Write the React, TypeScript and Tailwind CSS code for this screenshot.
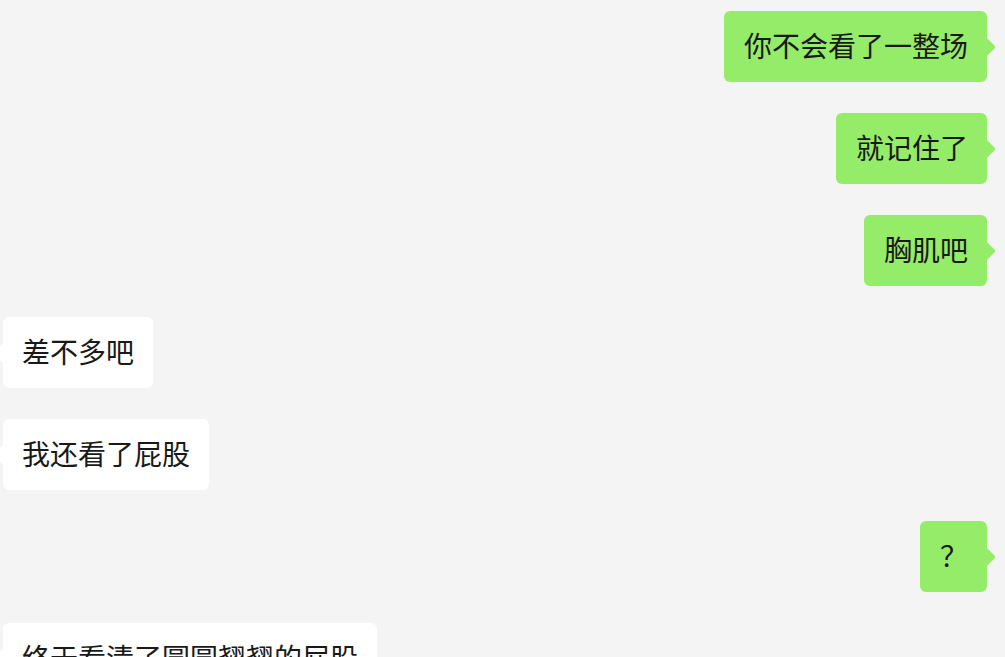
type Msg = { side: "left" | "right"; text: string };

const messages: Msg[] = [
  { side: "right", text: "你不会看了一整场" },
  { side: "right", text: "就记住了" },
  { side: "right", text: "胸肌吧" },
  { side: "left", text: "差不多吧" },
  { side: "left", text: "我还看了屁股" },
  { side: "right", text: "？" },
  { side: "left", text: "终于看清了圆圆翘翘的屁股" },
];

function Bubble({ side, text }: Msg) {
  const mine = side === "right";
  return (
    <div className={mine ? "self-end mr-[18px]" : "self-start ml-[3px]"}>
      <div
        className={
          mine
            ? "relative flex h-[71px] items-center rounded-[6px] bg-[#95ec69] pb-[4px] pl-5 pr-[19px]"
            : "relative flex h-[71px] items-center rounded-[6px] bg-white pb-[4px] pl-[19px] pr-[19px]"
        }
      >
        {mine ? (
          <span className="absolute right-[-6px] top-1/2 h-[14px] w-[14px] -translate-y-1/2 rotate-45 rounded-[2px] bg-[#95ec69]" />
        ) : (
          <span className="absolute left-[-7px] top-1/2 h-[14px] w-[14px] -translate-y-1/2 rotate-45 rounded-[2px] bg-white" />
        )}
        <span className="relative whitespace-nowrap text-[28px] leading-none text-[#191919]">{text}</span>
      </div>
    </div>
  );
}

export default function App() {
  return (
    <div
      className="flex h-[657px] w-full flex-col gap-[31px] overflow-hidden bg-[#f4f4f4] pt-[11px]"
      style={{ fontFamily: '"Noto Sans CJK SC", "Noto Sans", sans-serif' }}
    >
      {messages.map((m, i) => (
        <Bubble key={i} {...m} />
      ))}
    </div>
  );
}
